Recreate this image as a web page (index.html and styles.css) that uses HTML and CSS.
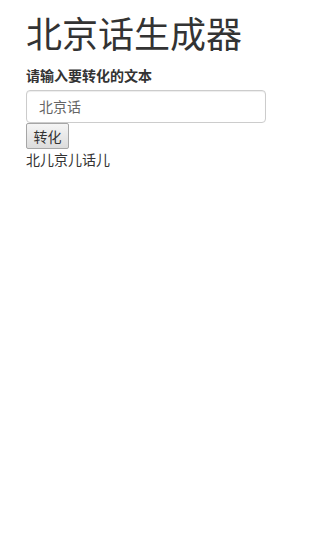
FILE: index.html
```html
<!DOCTYPE html>
<html lang="zh-CN">
<head>
<meta charset="utf-8">
<title>北京话生成器</title>
<link rel="stylesheet" href="styles.css">
</head>
<body>
<div class="container">
  <h1 class="title">北京话生成器</h1>
  <label class="label" for="src">请输入要转化的文本</label>
  <input id="src" class="field" type="text" placeholder="北京话">
  <button class="btn" type="button">转化</button>
  <div class="result">北儿京儿话儿</div>
</div>
</body>
</html>
```

FILE: styles.css
```css
html, body {
  margin: 0;
  padding: 0;
  background: #fff;
}
body {
  font-family: "Noto Sans CJK SC", "Noto Sans", "Liberation Sans", sans-serif;
  font-size: 14px;
  line-height: 20px;
  color: #333;
}
.container {
  padding: 0 26px;
}
.title {
  font-size: 36px;
  font-weight: 400;
  line-height: 1.1;
  margin: 13px 0 12px;
  color: #333;
}
.label {
  display: block;
  font-weight: 700;
  font-size: 14px;
  line-height: 20px;
  margin-bottom: 5px;
}
.field {
  display: block;
  box-sizing: border-box;
  width: 240px;
  height: 33px;
  margin: 0;
  padding: 6px 12px;
  font-family: inherit;
  font-size: 14px;
  color: #555;
  border: 1px solid #ccc;
  border-radius: 4px;
  box-shadow: inset 0 1px 1px rgba(0,0,0,.075);
  outline: none;
}
.field::placeholder {
  color: #666;
}
.btn {
  display: block;
  box-sizing: border-box;
  height: 26px;
  width: 43px;
  margin: 0;
  padding: 0;
  font-family: inherit;
  font-size: 14px;
  line-height: 20px;
  color: #333;
  background: linear-gradient(#f5f5f5, #dcdcdc);
  border: 1px solid #a6a6a6;
  border-radius: 2px;
}
.result {
  line-height: 20px;
}
```
